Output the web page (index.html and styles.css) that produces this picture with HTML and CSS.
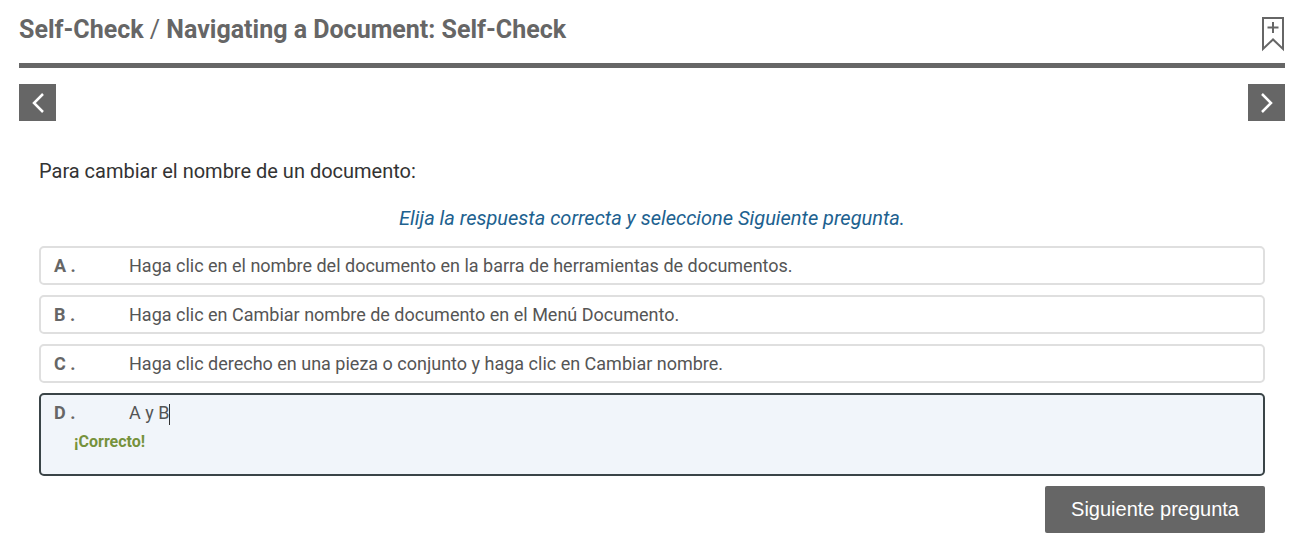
FILE: index.html
```html
<!DOCTYPE html>
<html lang="es">
<head>
<meta charset="utf-8">
<meta name="viewport" content="width=device-width, initial-scale=1">
<title>Self-Check / Navigating a Document: Self-Check</title>
<link rel="stylesheet" href="styles.css">
</head>
<body>
<header class="page-header">
  <h1 class="title">Self-Check <span class="slash">/</span> Navigating a Document: Self-Check</h1>
  <button class="bookmark" type="button" aria-label="Bookmark">
    <svg width="24" height="36" viewBox="0 0 24 36" fill="none" stroke="#666" stroke-width="2">
      <path d="M2 2H22V33L12 23.500L2 33Z"/>
      <path d="M12 6V17M6.500 11.500H17.500"/>
    </svg>
  </button>
</header>
<nav class="pager">
  <button class="step" type="button" aria-label="Anterior">
    <svg width="14" height="22" viewBox="0 0 14 22" fill="none" stroke="#fff" stroke-width="2.500"><path d="M12 2L3 11L12 20"/></svg>
  </button>
  <button class="step" type="button" aria-label="Siguiente">
    <svg width="14" height="22" viewBox="0 0 14 22" fill="none" stroke="#fff" stroke-width="2.500"><path d="M2 2L11 11L2 20"/></svg>
  </button>
</nav>
<main class="quiz">
  <p class="question">Para cambiar el nombre de un documento:</p>
  <p class="hint">Elija la respuesta correcta y seleccione Siguiente pregunta.</p>
  <div class="answers">
    <button class="answer" type="button"><span class="letter">A .</span><span class="text">Haga clic en el nombre del documento en la barra de herramientas de documentos.</span></button>
    <button class="answer" type="button"><span class="letter">B .</span><span class="text">Haga clic en Cambiar nombre de documento en el Menú Documento.</span></button>
    <button class="answer" type="button"><span class="letter">C .</span><span class="text">Haga clic derecho en una pieza o conjunto y haga clic en Cambiar nombre.</span></button>
    <button class="answer selected" type="button"><span class="letter">D .</span><span class="text">A y B<span class="caret"></span></span><span class="feedback">¡Correcto!</span></button>
  </div>
  <button class="next" type="button">Siguiente pregunta</button>
</main>
</body>
</html>
```
FILE: styles.css
```css
* {
  box-sizing: border-box;
}

body {
  margin: 0;
  padding: 12px 21px 18px 19px;
  background: #fff;
  color: #333;
  font-family: Roboto, "Liberation Sans", sans-serif;
}

button {
  margin: 0;
  border: 0;
  font: inherit;
  cursor: pointer;
}

svg {
  display: block;
}

.page-header {
  display: flex;
  justify-content: space-between;
  padding-bottom: 11px;
  border-bottom: 5px solid #666;
}

.title {
  margin: 0;
  color: #666;
  font-size: 25px;
  font-weight: 700;
  line-height: 36px;
}

.slash {
  font-weight: 400;
}

.bookmark {
  align-self: flex-start;
  padding: 4px 0 0;
  background: none;
}

.pager {
  display: flex;
  justify-content: space-between;
  padding-top: 16px;
}

.step {
  display: flex;
  align-items: center;
  justify-content: center;
  width: 37px;
  height: 37px;
  padding: 0;
  background: #666;
}

.quiz {
  display: flex;
  flex-direction: column;
  padding: 35px 20px 0;
}

.question {
  margin: 0 0 17px;
  font-size: 20px;
  line-height: 30px;
}

.hint {
  margin: 0 0 13px;
  color: #20618f;
  font-size: 20px;
  font-style: italic;
  line-height: 30px;
  text-align: center;
}

.answers {
  display: grid;
  gap: 10px;
}

.answer {
  display: grid;
  grid-template-columns: 75px 1fr;
  padding: 6px 13px 5px;
  border: 2px solid #dfdfdf;
  border-radius: 5px;
  background: #fff;
  color: #555;
  font-size: 18px;
  line-height: 24px;
  text-align: left;
}

.letter {
  color: #666;
  font-weight: 700;
}

.selected {
  padding-bottom: 20px;
  border-color: #3a4447;
  background: #f1f5fa;
}

.caret {
  display: inline-block;
  height: 21px;
  border-left: 1px solid #333;
  vertical-align: middle;
}

.feedback {
  grid-column: 1 / -1;
  padding: 5px 0 0 20px;
  color: #76923c;
  font-size: 16px;
  font-weight: 700;
}

.next {
  align-self: flex-end;
  margin-top: 10px;
  padding: 8px 26px 9px;
  border-radius: 2px;
  background: #666;
  color: #fff;
  font-family: "Liberation Sans", Arial, sans-serif;
  font-size: 20px;
  line-height: 30px;
}
```
